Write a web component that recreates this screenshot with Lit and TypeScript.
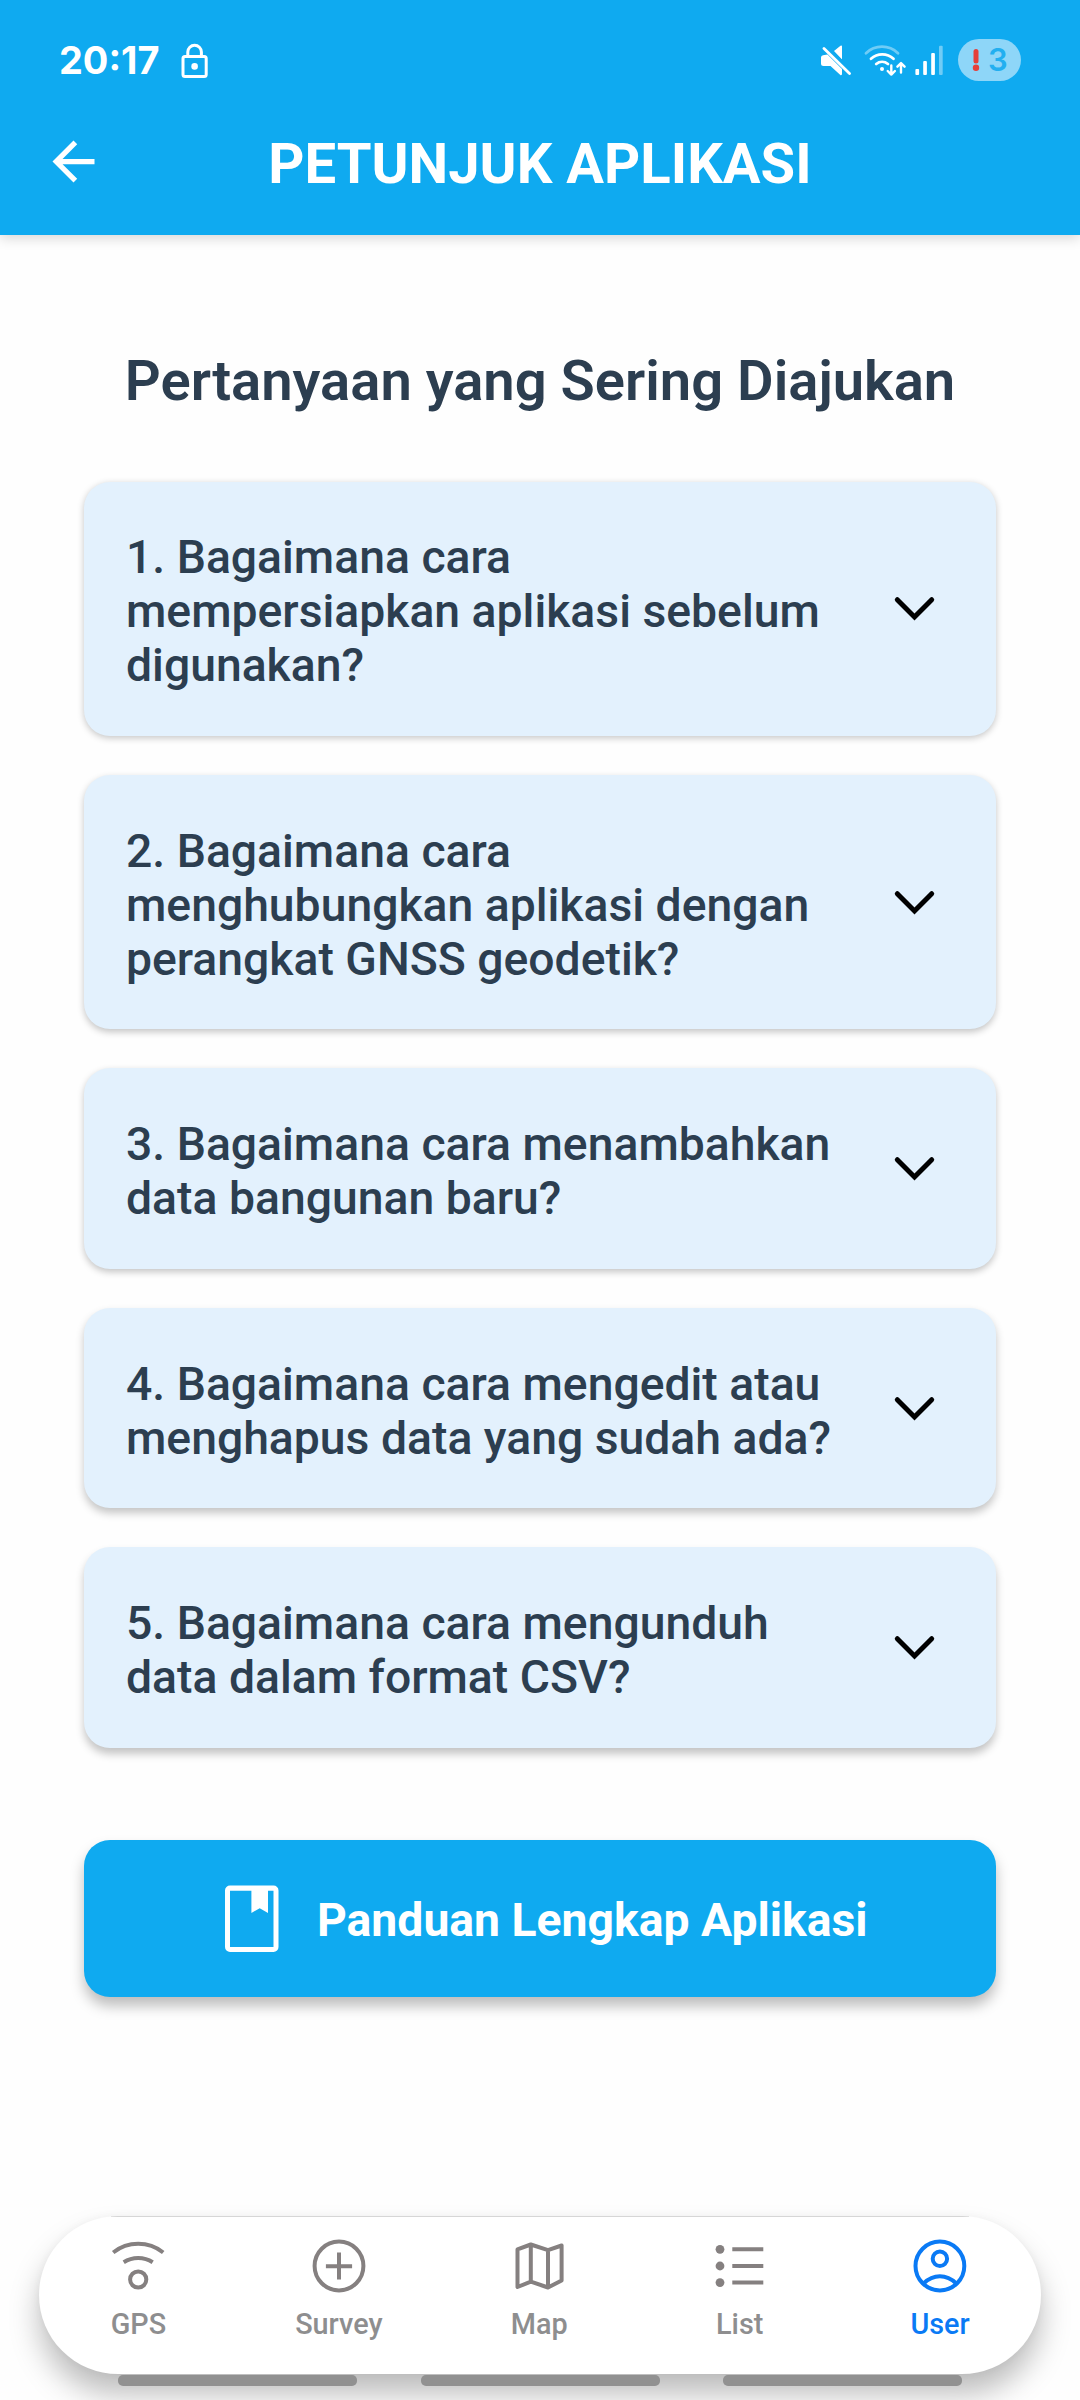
import { LitElement, html, css, svg } from "lit";
import { customElement, property } from "lit/decorators.js";
import { classMap } from "lit/directives/class-map.js";

@customElement("status-bar")
class StatusBar extends LitElement {
  static styles = css`
    :host {
      display: flex;
      align-items: center;
      height: 42px;
      padding: 39px 59px 0 59px;
      color: #fff;
    }
    svg { display: block; flex: none; }
    .time {
      font: 700 37.9px/42px Inter, Roboto, sans-serif;
      margin-right: 20.5px;
    }
    .right { margin-left: auto; display: flex; align-items: center; }
    .wifi { margin-left: 12px; }
    .signal { margin-left: 8px; }
    .battery {
      box-sizing: border-box;
      width: 63px;
      height: 42px;
      margin-left: 15px;
      padding-left: 14px;
      border-radius: 21px;
      background: #8ed6f8;
      display: flex;
      align-items: center;
      gap: 8px;
    }
    .level { font: 600 31px/42px Inter, Roboto, sans-serif; color: #22aff0; }
  `;
  render() {
    return html`
      <span class="time">20:17</span>
      <svg width="29" height="42" viewBox="0 0 29 42" fill="none" stroke="#fff" stroke-width="3">
        <rect x="3" y="17.5" width="23.2" height="20" rx="2"></rect>
        <path d="M7.8 17.5V13a6.8 6.8 0 0 1 13.6 0v4.5"></path>
        <circle cx="14.6" cy="27.4" r="3.3" fill="#fff" stroke="none"></circle>
      </svg>
      <div class="right">
        <svg width="31" height="42" viewBox="0 0 31 42">
          <path fill="#fff" d="M1 18.5q0-2 2-2.300L7.500 15.600 22 30V35q0 1.200-1.400 1.200L10.500 27H3.500Q1 27 1 24.500ZM14 12 20.500 6.700Q22 6 22 7.500V20.500Z"></path>
          <path d="M6 8.500 31 33" stroke="#0faaf0" stroke-width="5"></path>
          <path d="M4 9.500 29.500 34.500" stroke="#fff" stroke-width="2.800" stroke-linecap="round"></path>
        </svg>
        <svg class="wifi" width="44" height="42" viewBox="0 0 44 42" fill="none" stroke="#fff" stroke-width="2.800" stroke-linecap="round" stroke-linejoin="round">
          <path d="M3 14.200a23 23 0 0 1 32 0" opacity=".4"></path>
          <path d="M8 19.800a16.500 16.500 0 0 1 22.500 0M13.200 25a9.500 9.500 0 0 1 11.800 0"></path>
          <circle cx="19" cy="30" r="2" fill="#fff" stroke="none"></circle>
          <path stroke-width="2.400" d="M28.300 26.500v9M24.700 32l3.600 3.600 3.600-3.600M38 33.500v-9M34.400 27.700 38 24.100l3.600 3.600"></path>
        </svg>
        <svg class="signal" width="28" height="42" viewBox="0 0 28 42" fill="#fff">
          <rect x=".4" y="30" width="3.700" height="6" rx="1"></rect>
          <rect x="8.200" y="22" width="3.700" height="14" rx="1"></rect>
          <rect x="16.200" y="14" width="3.700" height="22" rx="1"></rect>
          <rect x="24" y="6.700" width="3.700" height="29.300" rx="1" opacity=".4"></rect>
        </svg>
        <div class="battery">
          <svg width="8" height="42" viewBox="0 0 8 42" fill="#e53f3a">
            <rect x="1.500" y="10" width="5" height="14.500" rx="2.500"></rect>
            <circle cx="4" cy="28.700" r="3.200"></circle>
          </svg>
          <span class="level">3</span>
        </div>
      </div>
    `;
  }
}

@customElement("faq-card")
class FaqCard extends LitElement {
  @property() question = "";
  static styles = css`
    :host {
      display: flex;
      align-items: center;
      gap: 38px;
      padding: 0 50px 0 42px;
      border-radius: 26px;
      background: #e3f1fd;
    }
    .question {
      flex: 1;
      padding: 48.7px 0 43.6px;
      font: 500 46.3px/54px Roboto, sans-serif;
      color: #2c3e50;
    }
    svg { display: block; flex: none; }
  `;
  render() {
    return html`
      <div class="question">${this.question}</div>
      <svg width="63" height="63" viewBox="0 0 63 63" fill="none" stroke="#000" stroke-width="5" stroke-linecap="round">
        <path d="M14.300 22.700 31.500 39.900 48.700 22.700"></path>
      </svg>
    `;
  }
}

const icons = {
  gps: svg`<path d="M2.200 14.500q11-8.700 25-8.700t25 8.700M12.700 24.200q6.500-4.200 14.500-4.200t14.500 4.200"></path><circle cx="27.200" cy="41.500" r="8.100"></circle>`,
  survey: svg`<circle cx="27" cy="28" r="24.400"></circle><path d="M13.900 28.300h26.200M27 14.500v27"></path>`,
  map: svg`<path stroke-linejoin="round" d="M5.500 11.400 18.800 6.500 36 12.200 49.600 7.500V42.500L36 49.500 18.800 43.700 5.500 49ZM18.800 6.500V43.700M36 12.200V49.500"></path>`,
  list: svg`<g fill="currentColor" stroke="none"><circle cx="8" cy="11.300" r="4.400"></circle><circle cx="8" cy="28" r="4.400"></circle><circle cx="8" cy="44.600" r="4.400"></circle></g><path d="M20.300 11.200h31M20.300 27.900h31M20.300 44.500h31"></path>`,
  user: svg`<circle cx="26.900" cy="28" r="24.400"></circle><circle cx="26.900" cy="20.800" r="7.200"></circle><path d="M10.500 45.500q7.500-7.200 16.400-7.200t16.400 7.200"></path>`,
};

@customElement("bottom-nav")
class BottomNav extends LitElement {
  @property() active = "User";
  private items = [
    { label: "GPS", icon: icons.gps },
    { label: "Survey", icon: icons.survey },
    { label: "Map", icon: icons.map },
    { label: "List", icon: icons.list },
    { label: "User", icon: icons.user },
  ];
  static styles = css`
    :host {
      box-sizing: border-box;
      display: grid;
      grid-template-columns: repeat(5, 1fr);
      height: 158px;
      padding-top: 22px;
      border-radius: 79px;
      background: linear-gradient(#d6d6d6, #d6d6d6) center top / 858px 1px no-repeat #fff;
      box-shadow: 0 20px 30px rgba(0, 0, 0, 0.26), 0 0 8px rgba(0, 0, 0, 0.04);
    }
    .item {
      display: flex;
      flex-direction: column;
      align-items: center;
      gap: 13px;
      color: #858080;
    }
    .label { margin-right: 1.5px; font: 500 28.8px/34px Roboto, sans-serif; color: #8e8e8f; }
    .active, .active .label { color: #0a7af5; }
    svg { display: block; }
  `;
  render() {
    return this.items.map(
      (item) => html`
        <div class=${classMap({ item: true, active: item.label === this.active })}>
          <svg width="56" height="56" viewBox="0 0 56 56" fill="none" stroke="currentColor" stroke-width="4">${item.icon}</svg>
          <span class="label">${item.label}</span>
        </div>
      `,
    );
  }
}

@customElement("app-root")
class AppRoot extends LitElement {
  private questions = [
    "1. Bagaimana cara mempersiapkan aplikasi sebelum digunakan?",
    "2. Bagaimana cara menghubungkan aplikasi dengan perangkat GNSS geodetik?",
    "3. Bagaimana cara menambahkan data bangunan baru?",
    "4. Bagaimana cara mengedit atau menghapus data yang sudah ada?",
    "5. Bagaimana cara mengunduh data dalam format CSV?",
  ];
  static styles = css`
    :host {
      display: flex;
      flex-direction: column;
      width: 1080px;
      height: 2400px;
      overflow: hidden;
      background: #fefefe;
      font-family: Roboto, sans-serif;
    }
    svg { display: block; flex: none; }
    .header {
      box-sizing: border-box;
      height: 235px;
      flex: none;
      background: #0faaf0;
      color: #fff;
      box-shadow: 0 3px 12px rgba(0, 0, 0, 0.16);
    }
    .bar {
      display: grid;
      grid-template-columns: 63px 1fr 63px;
      padding: 49px 42px 0;
      align-items: start;
    }
    .title {
      margin: 1px 0 0;
      text-align: center;
      font-size: 56.2px;
      line-height: 66px;
      font-weight: 700;
    }
    .content {
      flex: 1;
      display: flex;
      flex-direction: column;
      padding: 113px 84px 0;
    }
    .heading {
      margin: 0 0 67.5px;
      text-align: center;
      font-size: 56.15px;
      line-height: 66px;
      font-weight: 600;
      color: #2c3e50;
    }
    .faq { display: flex; flex-direction: column; gap: 39.2px; }
    .card { box-shadow: 0 2px 7px rgba(0, 0, 0, 0.23); }
    .card:nth-child(n + 2) { box-shadow: 0 3px 7px rgba(0, 0, 0, 0.23); }
    .card:nth-child(n + 4) { box-shadow: 0 5px 8px rgba(0, 0, 0, 0.23); }
    .card:nth-child(n + 5) { box-shadow: 0 6px 9px rgba(0, 0, 0, 0.23); }
    .guide {
      display: flex;
      align-items: center;
      gap: 37px;
      height: 157.700px;
      margin-top: 92px;
      padding-left: 140px;
      border-radius: 26px;
      background: #0faaf0;
      color: #fff;
      box-shadow: 0 9px 14px rgba(0, 0, 0, 0.26);
    }
    .guide-label { font-size: 46.3px; line-height: 54px; font-weight: 700; margin-top: 3px; }
    .nav { flex: none; margin: 0 39px; }
    .pills {
      flex: none;
      display: flex;
      justify-content: center;
      gap: 63.5px;
      padding: 1px 0 14px 0;
      z-index: 1;
    }
    .pill { width: 239px; height: 11px; border-radius: 5px; background: #919191; }
  `;
  render() {
    return html`
      <header class="header">
        <status-bar></status-bar>
        <div class="bar">
          <svg width="63" height="63" viewBox="0 0 24 24" fill="#fff">
            <path d="M20 11H7.830l5.590-5.590L12 4l-8 8 8 8 1.410-1.410L7.830 13H20v-2z"></path>
          </svg>
          <h1 class="title">PETUNJUK APLIKASI</h1>
        </div>
      </header>
      <main class="content">
        <h2 class="heading">Pertanyaan yang Sering Diajukan</h2>
        <div class="faq">
          ${this.questions.map((q) => html`<faq-card class="card" .question=${q}></faq-card>`)}
        </div>
        <div class="guide">
          <svg width="56" height="68" viewBox="0 0 56 68" fill="#fff">
            <path fill-rule="evenodd" d="M6 .5H49.500a5 5 0 0 1 5 5V62a5 5 0 0 1-5 5H6a5 5 0 0 1-5-5V5.500a5 5 0 0 1 5-5ZM6 5.700V62H49.500V5.700H44V28L35.700 23.200 27.400 28V5.700Z"></path>
          </svg>
          <span class="guide-label">Panduan Lengkap Aplikasi</span>
        </div>
      </main>
      <bottom-nav class="nav" active="User"></bottom-nav>
      <div class="pills">
        <div class="pill"></div>
        <div class="pill"></div>
        <div class="pill"></div>
      </div>
    `;
  }
}
